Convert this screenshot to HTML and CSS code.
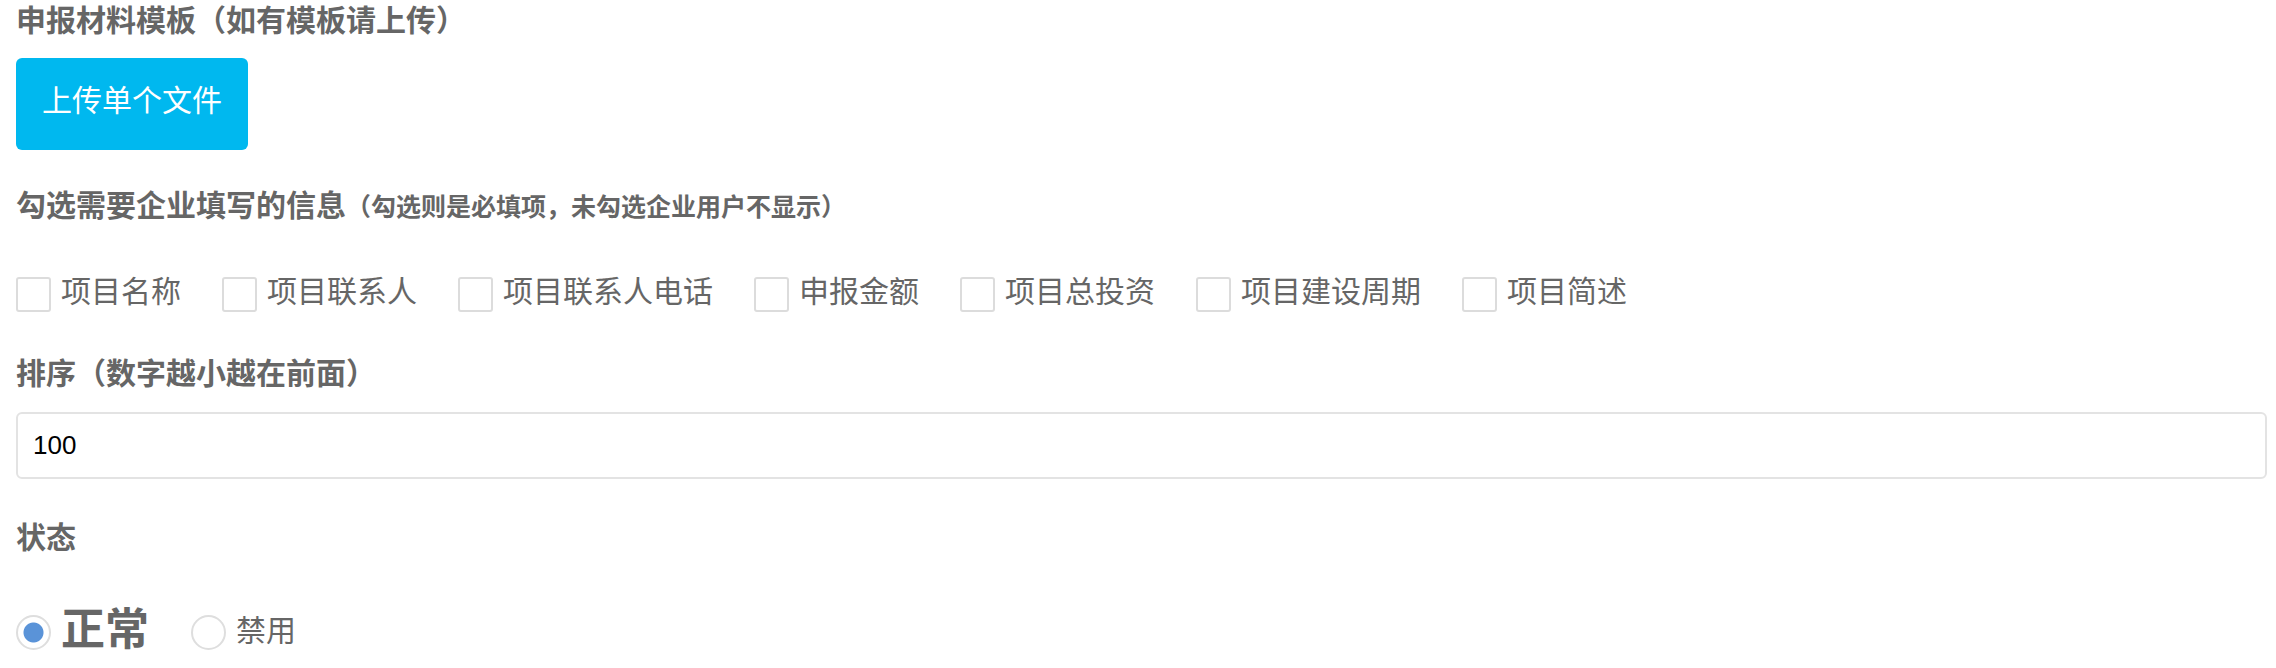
FILE: index.html
```html
<!DOCTYPE html>
<html lang="zh-CN">
<head>
<meta charset="utf-8">
<title>表单</title>
<link rel="stylesheet" href="styles.css">
</head>
<body>
<form class="page">
  <div class="field-title title-first">申报材料模板（如有模板请上传）</div>
  <div class="upload-row">
    <button type="button" class="upload-btn">上传单个文件</button>
  </div>

  <div class="field-title title-fields">勾选需要企业填写的信息<span class="title-note">（勾选则是必填项，未勾选企业用户不显示）</span></div>
  <div class="check-row">
    <label class="check-item"><input type="checkbox" class="check-box"><span class="check-text">项目名称</span></label>
    <label class="check-item"><input type="checkbox" class="check-box"><span class="check-text">项目联系人</span></label>
    <label class="check-item"><input type="checkbox" class="check-box"><span class="check-text">项目联系人电话</span></label>
    <label class="check-item"><input type="checkbox" class="check-box"><span class="check-text">申报金额</span></label>
    <label class="check-item"><input type="checkbox" class="check-box"><span class="check-text">项目总投资</span></label>
    <label class="check-item"><input type="checkbox" class="check-box"><span class="check-text">项目建设周期</span></label>
    <label class="check-item"><input type="checkbox" class="check-box"><span class="check-text">项目简述</span></label>
  </div>

  <div class="field-title title-sort">排序（数字越小越在前面）</div>
  <input type="text" class="text-input" value="100">

  <div class="field-title title-status">状态</div>
  <div class="radio-row">
    <label class="radio-item"><input type="radio" name="status" class="radio-dot" checked><span class="radio-text radio-text-on">正常</span></label>
    <label class="radio-item"><input type="radio" name="status" class="radio-dot"><span class="radio-text">禁用</span></label>
  </div>
</form>
</body>
</html>
```

FILE: styles.css
```css
html, body {
  margin: 0;
  padding: 0;
  background: #ffffff;
}

body {
  font-family: "Helvetica Neue", Helvetica, "Liberation Sans", Arial, "Noto Sans CJK SC", sans-serif;
  color: #666666;
}

.page {
  display: flex;
  flex-direction: column;
  align-items: stretch;
  padding: 0 9px 0 16px;
}

.field-title {
  font-size: 30px;
  font-weight: 700;
  line-height: 42px;
  height: 42px;
  color: #666666;
  white-space: nowrap;
}

.title-first { margin-top: 0; }
.title-fields { margin-top: 35px; }
.title-sort { margin-top: 38px; }
.title-status { margin-top: 38px; }

.title-note {
  font-size: 25px;
  font-weight: 700;
}

.upload-row {
  display: flex;
  margin-top: 16px;
}

.upload-btn {
  font-family: inherit;
  font-size: 30px;
  color: #ffffff;
  background: #00b8ef;
  border: none;
  border-radius: 6px;
  height: 92px;
  width: 232px;
  padding: 0 0 6px 0;
  line-height: 86px;
  cursor: pointer;
}

.check-row {
  display: flex;
  align-items: center;
  height: 42px;
  margin-top: 46px;
  column-gap: 41px;
}

.check-item {
  display: flex;
  align-items: center;
  column-gap: 10px;
}

.check-box {
  appearance: none;
  -webkit-appearance: none;
  margin: 0;
  width: 35px;
  height: 35px;
  box-sizing: border-box;
  border: 2px solid #dcdcdc;
  border-radius: 3px;
  background: #ffffff;
}

.check-text {
  font-size: 30px;
  line-height: 38px;
  padding-bottom: 5px;
  color: #666666;
  white-space: nowrap;
}

.text-input {
  margin: 17px 0 0 0;
  box-sizing: border-box;
  width: 100%;
  height: 67px;
  border: 2px solid #e3e3e3;
  border-radius: 6px;
  padding: 0 15px;
  font-family: "Helvetica Neue", Helvetica, "Liberation Sans", Arial, sans-serif;
  font-size: 26px;
  color: #000000;
  background: #ffffff;
  outline: none;
}

.radio-row {
  display: flex;
  align-items: center;
  height: 60px;
  margin-top: 43px;
  column-gap: 42px;
}

.radio-item {
  display: flex;
  align-items: center;
  column-gap: 10px;
}

.radio-dot {
  appearance: none;
  -webkit-appearance: none;
  margin: 0;
  width: 35px;
  height: 35px;
  box-sizing: border-box;
  border: 2px solid #dedede;
  border-radius: 50%;
  background: #ffffff;
}

.radio-dot:checked {
  background: radial-gradient(circle, #5a93d8 0, #5a93d8 9.5px, #ffffff 10.5px);
}

.radio-text {
  font-size: 30px;
  line-height: 42px;
  padding-bottom: 3px;
  color: #666666;
}

.radio-text-on {
  font-size: 44px;
  font-weight: 700;
  line-height: 60px;
  padding-bottom: 5px;
}
```
